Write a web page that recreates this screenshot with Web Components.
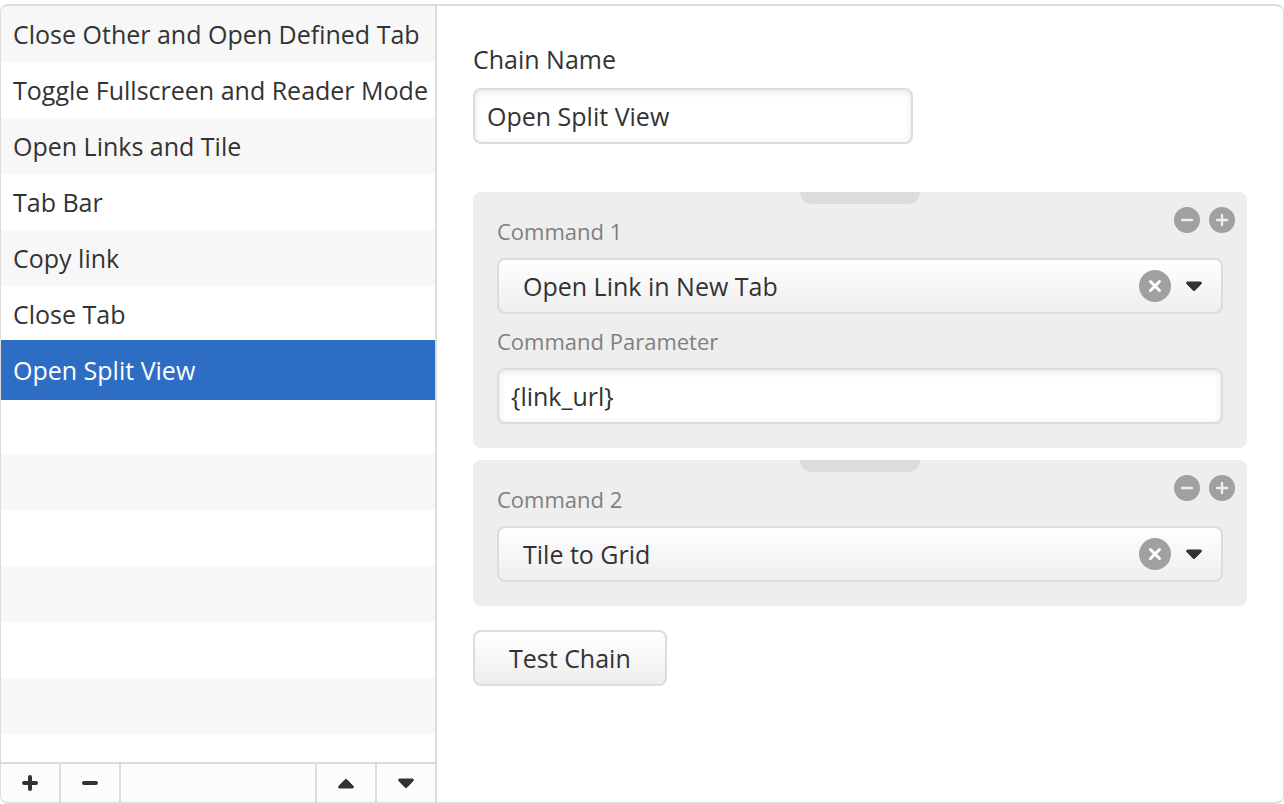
<!DOCTYPE html>
<html lang="en">
<head>
<meta charset="utf-8">
<title>Command Chains</title>
<style>
  body { margin: 0; background: #fff; }
  chain-editor {
    --border: #dcdcdc;
    --ink: #333;
    --muted: #808080;
    --accent: #2e6dc4;
    --text: 25px;
    --label: 22px;
    font: 25px/36px "Open Sans", "Noto Sans", sans-serif;
    color: #333;
  }
</style>
</head>
<body>
<chain-editor></chain-editor>

<script>
const define = (name, html, setup) => {
  const template = document.createElement('template');
  template.innerHTML = html;
  customElements.define(name, class extends HTMLElement {
    connectedCallback() {
      if (this.shadowRoot) return;
      const root = this.attachShadow({ mode: 'open' });
      root.append(template.content.cloneNode(true));
      if (setup) setup(this, root);
    }
  });
};

/* Labelled text box */
define('text-field', `
  <style>
    :host { display: block; }
    * { box-sizing: border-box; }
    label { display: block; line-height: 30px; color: var(--field-label, var(--muted));
      font-size: var(--field-size, var(--label)); margin-bottom: var(--field-gap, 12px); }
    input {
      display: block; width: 100%; height: 56px; padding: 0 12px;
      border: 2px solid var(--border); border-radius: 8px;
      font: inherit; font-size: var(--text); color: var(--ink); background: #fff;
      box-shadow: inset 0 2px 6px rgba(0,0,0,.1); outline: none;
    }
  </style>
  <label for="box"><slot></slot></label>
  <input id="box" type="text" spellcheck="false">`,
  (host, root) => { root.querySelector('input').value = host.getAttribute('value') || ''; });

/* Labelled command picker with a clear button */
define('command-picker', `
  <style>
    :host { display: block; }
    * { box-sizing: border-box; }
    label { display: block; line-height: 30px; margin-bottom: 12px; color: var(--muted); font-size: var(--label); }
    .box { position: relative; }
    select {
      appearance: none; display: block; width: 100%; height: 56px; padding: 0 92px 0 24px;
      border: 2px solid var(--border); border-radius: 8px; outline: none;
      font: inherit; color: var(--ink); background: linear-gradient(#fff, #eee);
    }
    button {
      position: absolute; right: 52px; top: 12px; width: 32px; height: 32px;
      padding: 0; border: 0; background: none;
    }
    svg { display: block; }
    .arrow { position: absolute; right: 20px; top: 23px; pointer-events: none; }
  </style>
  <label for="pick"><slot></slot></label>
  <div class="box">
    <select id="pick"></select>
    <button type="button" aria-label="Clear">
      <svg width="32" height="32" viewBox="0 0 32 32"><circle cx="16" cy="16" r="16" fill="#a0a0a0"/>
      <path d="M11.5 11.5l9 9M20.5 11.5l-9 9" stroke="#fff" stroke-width="3" stroke-linecap="round"/></svg>
    </button>
    <svg class="arrow" width="18" height="11" viewBox="0 0 18 11"><path d="M2.500 1h13a1 1 0 0 1 .7 1.700L9.900 9.300a1.300 1.300 0 0 1-1.800 0L1.800 2.700A1 1 0 0 1 2.500 1z" fill="#333" stroke="#333" stroke-width="1"/></svg>
  </div>`,
  (host, root) => { root.querySelector('select').add(new Option(host.getAttribute('value'))); });

define('command-card', `
  <style>
    :host { display: flex; flex-direction: column; gap: 12px; position: relative;
      padding: 24px; background: #eee; border-radius: 8px; }
    .grip { position: absolute; top: 0; left: 50%; margin-left: -60px; width: 120px; height: 12px;
      background: var(--border); border-radius: 0 0 12px 12px; }
    .tools { position: absolute; top: 15px; right: 12px; display: flex; gap: 9px; }
    button { width: 26px; height: 26px; padding: 0; border: 0; background: none; }
    svg { display: block; }
  </style>
  <div class="grip"></div>
  <slot></slot>
  <div class="tools">
    <button type="button" aria-label="Remove command"><svg width="26" height="26" viewBox="0 0 26 26"><circle cx="13" cy="13" r="13" fill="#a0a0a0"/><path d="M8 13h10" stroke="#eee" stroke-width="2.400" stroke-linecap="round"/></svg></button>
    <button type="button" aria-label="Add command"><svg width="26" height="26" viewBox="0 0 26 26"><circle cx="13" cy="13" r="13" fill="#a0a0a0"/><path d="M8 13h10M13 8v10" stroke="#eee" stroke-width="2.400" stroke-linecap="round"/></svg></button>
  </div>`);

define('push-button', `
  <style>
    :host { display: block; }
    button { box-sizing: border-box; height: 56px; padding: 0 34px; border: 2px solid var(--border);
      border-radius: 8px; font: inherit; color: inherit; background: linear-gradient(#fff, #eee); }
  </style>
  <button type="button"><slot></slot></button>`);

/* One row of the chain list */
define('chain-item', `
  <style>
    :host { display: block; height: 56px; }
    button { display: block; box-sizing: border-box; width: 100%; height: 56px; padding: 0 12px; border: 0;
      background: none; font: inherit; color: inherit; text-align: left; white-space: nowrap; }
    :host([selected]) button { background: var(--accent); color: #fff; box-shadow: 0 -2px var(--accent), 0 2px var(--accent); }
  </style>
  <button type="button"><slot></slot></button>`);

/* Striped list of chains */
define('chain-list', `
  <style>
    :host { display: block; overflow: hidden;
      background: repeating-linear-gradient(#f7f7f7 0 56px, #fff 56px 112px); }
  </style>
  <slot></slot>`);

/* Add, remove and reorder buttons under the list */
define('list-toolbar', `
  <style>
    :host { display: flex; justify-content: space-between; height: 38px;
      border-top: 2px solid var(--border); background: #fcfcfc; }
    div { display: flex; }
    button { box-sizing: border-box; width: 60px; height: 38px; padding: 0; border: 0 solid var(--border);
      background: none; display: grid; place-items: center; }
    .start button { border-right-width: 2px; }
    .end button { border-left-width: 2px; }
    path { fill: #333; stroke: #333; }
    .line { stroke-width: 4; stroke-linecap: round; }
  </style>
  <div class="start">
    <button type="button" aria-label="Add chain"><svg width="18" height="18" viewBox="0 0 18 18"><path class="line" d="M3 9h12M9 3v12"/></svg></button>
    <button type="button" aria-label="Remove chain"><svg width="18" height="18" viewBox="0 0 18 18"><path class="line" d="M3 9h12"/></svg></button>
  </div>
  <div class="end">
    <button type="button" aria-label="Move up"><svg width="18" height="12" viewBox="0 0 18 12"><path d="M2.500 11h13a1 1 0 0 0 .7-1.700L9.900 2.700a1.300 1.300 0 0 0-1.800 0L1.800 9.300A1 1 0 0 0 2.500 11z"/></svg></button>
    <button type="button" aria-label="Move down"><svg width="18" height="12" viewBox="0 0 18 12"><path d="M2.500 2h13a1 1 0 0 1 .7 1.700L9.900 10.300a1.300 1.300 0 0 1-1.800 0L1.800 3.700A1 1 0 0 1 2.500 2z"/></svg></button>
  </div>`);

define('chain-editor', `
  <style>
    :host { display: flex; flex-direction: column; box-sizing: border-box; min-height: 100vh; padding-top: 4px; }
    .frame { flex: 1; display: grid; grid-template-columns: 436px 1fr; overflow: hidden;
      border: solid var(--border); border-width: 2px 1px; border-radius: 8px; background: #fff; }
    aside { display: flex; flex-direction: column; border-right: 2px solid var(--border); min-width: 0; }
    chain-list { flex: 1; }
    main { display: flex; flex-direction: column; padding: 38px 36px; min-width: 0; }
    .name { width: 440px; max-width: 100%; margin-bottom: 48px;
      --field-label: var(--ink); --field-size: var(--text); --field-gap: 14px; }
    .cards { display: grid; gap: 12px; margin-bottom: 24px; }
    push-button { align-self: flex-start; }
  </style>
  <div class="frame">
    <aside>
      <chain-list>
        <chain-item>Close Other and Open Defined Tab</chain-item>
        <chain-item>Toggle Fullscreen and Reader Mode</chain-item>
        <chain-item>Open Links and Tile</chain-item>
        <chain-item>Tab Bar</chain-item>
        <chain-item>Copy link</chain-item>
        <chain-item>Close Tab</chain-item>
        <chain-item selected>Open Split View</chain-item>
      </chain-list>
      <list-toolbar></list-toolbar>
    </aside>
    <main>
      <text-field class="name" value="Open Split View">Chain Name</text-field>
      <div class="cards">
        <command-card>
          <command-picker value="Open Link in New Tab">Command 1</command-picker>
          <text-field value="{link_url}">Command Parameter</text-field>
        </command-card>
        <command-card>
          <command-picker value="Tile to Grid">Command 2</command-picker>
        </command-card>
      </div>
      <push-button>Test Chain</push-button>
    </main>
  </div>`);
</script>
</body>
</html>
